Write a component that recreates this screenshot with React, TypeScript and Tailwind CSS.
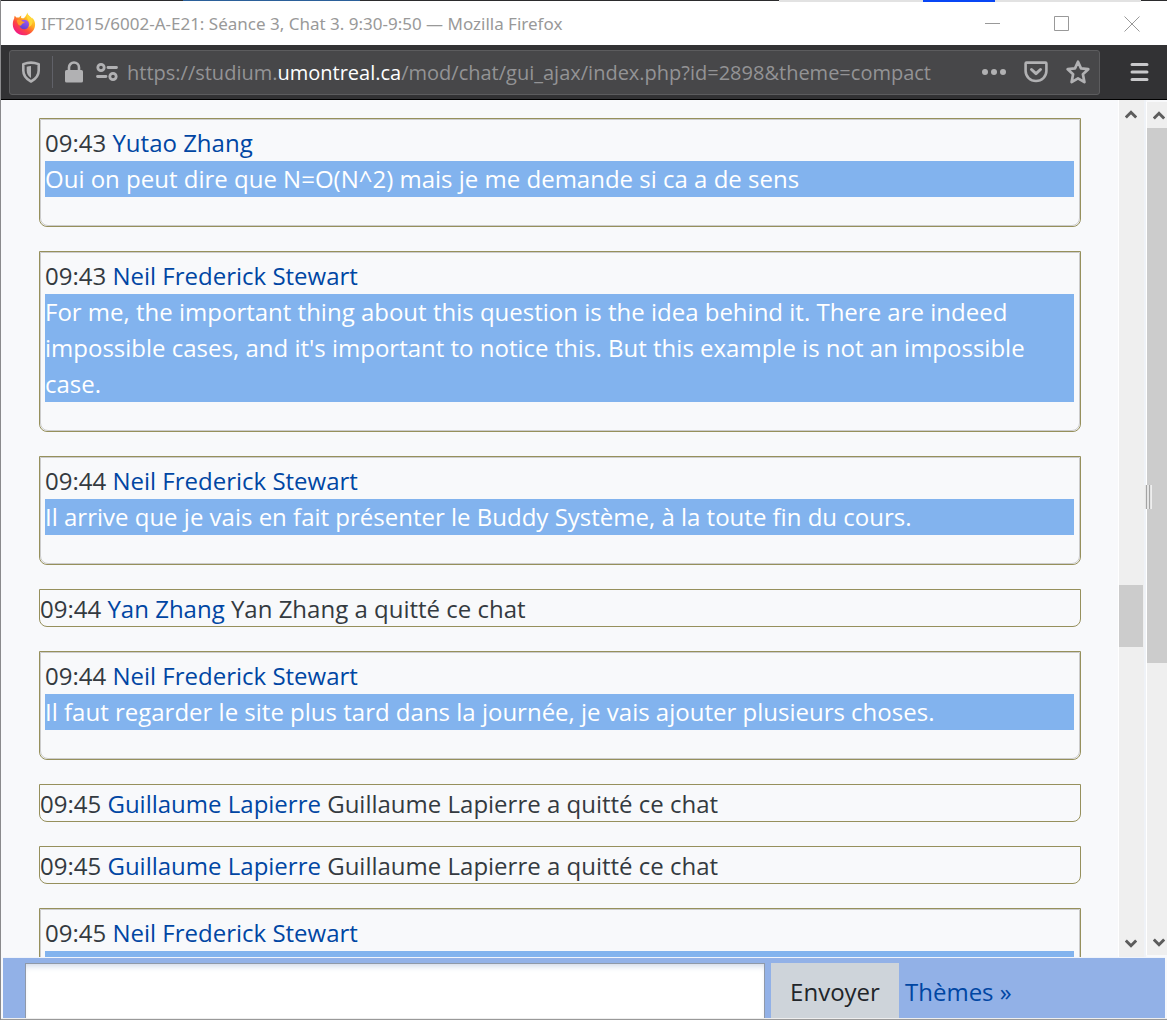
type Message = { time: string; author: string; body?: string; system?: boolean };

const messages: Message[] = [
  { time: "09:43", author: "Yutao Zhang", body: "Oui on peut dire que N=O(N^2) mais je me demande si ca a de sens" },
  {
    time: "09:43",
    author: "Neil Frederick Stewart",
    body: "For me, the important thing about this question is the idea behind it. There are indeed impossible cases, and it's important to notice this. But this example is not an impossible case.",
  },
  { time: "09:44", author: "Neil Frederick Stewart", body: "Il arrive que je vais en fait présenter le Buddy Système, à la toute fin du cours." },
  { time: "09:44", author: "Yan Zhang", body: "Yan Zhang a quitté ce chat", system: true },
  { time: "09:44", author: "Neil Frederick Stewart", body: "Il faut regarder le site plus tard dans la journée, je vais ajouter plusieurs choses." },
  { time: "09:45", author: "Guillaume Lapierre", body: "Guillaume Lapierre a quitté ce chat", system: true },
  { time: "09:45", author: "Guillaume Lapierre", body: "Guillaume Lapierre a quitté ce chat", system: true },
  { time: "09:45", author: "Neil Frederick Stewart" },
];

function FirefoxLogo() {
  return (
    <svg viewBox="0 0 24 24" className="h-6 w-6 shrink-0" aria-hidden="true">
      <defs>
        <linearGradient id="flame" x1="0.85" y1="0.1" x2="0.2" y2="0.95">
          <stop offset="0" stopColor="#ffe83c" />
          <stop offset="0.35" stopColor="#ffab1f" />
          <stop offset="0.65" stopColor="#ff4a3d" />
          <stop offset="1" stopColor="#f0148c" />
        </linearGradient>
        <linearGradient id="globe" x1="0.7" y1="0" x2="0.3" y2="1">
          <stop offset="0" stopColor="#a259f2" />
          <stop offset="1" stopColor="#5b3fd0" />
        </linearGradient>
      </defs>
      <path
        fill="url(#flame)"
        d="M15.3 .4c.3 1.700 1.300 2.800 2.700 4 .9.7 1.700 1.400 2.200 2.300 0-.5-.1-.9-.3-1.300 2.200 1.900 3.300 4.600 3.200 7.300C22.900 18.700 18 23.300 12 23.300S.8 18.600.8 12.500c0-2.300.5-4.300 1.400-6 0-.8.1-1.800.500-2.700.6.500 1.100 1.100 1.600 1.800.9-.3 1.900-.3 2.800 0 .5-.9 1.400-1.600 2.400-2-.5.8-.6 1.600-.3 2.300.7.3 1.600.4 2.500.3 1.600-1.300 3-3.300 3.600-5.800z"
      />
      <circle cx="12.200" cy="12.500" r="4.800" fill="url(#globe)" />
      <path fill="#ff9a2a" d="M4.900 8.300c1.800-.9 3.800-.4 5.100.6.900.7 2 .7 2.700.9 0 1-1 1.300-2.100 1.800-1 .500-.9 1.800-1.800 2-1.900.4-3.800-2.200-3.900-5.300z" />
      <path fill="#ffd83a" d="M15.200 1.500c-.9 3.100-.2 4.800 1.200 7 1.300 2 1.500 4.700.2 6.600 3-1.200 4.600-3.900 4-6.800-.7-2.700-4.600-3.600-5.400-6.800z" />
    </svg>
  );
}

function ShieldIcon() {
  return (
    <svg viewBox="0 0 20 22" className="h-[22px] w-5 shrink-0" aria-hidden="true">
      <path fill="none" stroke="#b1b1b3" strokeWidth="2.600" strokeLinejoin="round" d="M10 1.600c3 0 5.300.6 7.700 1.500v6.400c0 4.800-2.800 8.500-7.700 11-4.900-2.500-7.700-6.200-7.700-11V3.100C4.700 2.200 7 1.600 10 1.600z" />
      <path fill="#b1b1b3" d="M10 5v12c-2.900-1.700-4.300-4.200-4.300-7.500V5.700C7.100 5.200 8.500 5 10 5z" />
    </svg>
  );
}

function LockIcon() {
  return (
    <svg viewBox="0 0 20 22" className="h-[22px] w-5 shrink-0" aria-hidden="true">
      <path fill="none" stroke="#b1b1b3" strokeWidth="2.600" d="M5 11V6.500a5 5 0 0 1 10 0V11" />
      <rect x="1" y="9" width="18" height="12.500" rx="1.600" fill="#b1b1b3" />
    </svg>
  );
}

function PermissionsIcon() {
  return (
    <svg viewBox="0 0 22 20" className="h-5 w-[22px] shrink-0" fill="none" stroke="#b1b1b3" strokeWidth="2.800" strokeLinecap="round" aria-hidden="true">
      <circle cx="5" cy="5.500" r="3.200" />
      <path d="M12 5.500h8.500M1.500 14.500h8.500" />
      <circle cx="17" cy="14.500" r="3.200" />
    </svg>
  );
}

function PocketIcon() {
  return (
    <svg viewBox="0 0 24 22" className="h-[22px] w-6" fill="none" stroke="#b1b1b3" strokeWidth="2.600" strokeLinecap="round" strokeLinejoin="round" aria-hidden="true">
      <path d="M2.500 1.600h19c.5 0 .9.400.9.900V10a10.400 10 0 0 1-20.800 0V2.500c0-.5.400-.9.900-.9z" />
      <path strokeWidth="3" d="M7.500 8.500 12 12.700l4.500-4.200" />
    </svg>
  );
}

function StarIcon() {
  return (
    <svg viewBox="0 0 24 24" className="h-6 w-6" aria-hidden="true">
      <path fill="none" stroke="#b1b1b3" strokeWidth="2.700" strokeLinejoin="round" d="m12 1.700 3 6.700 7.300.8-5.400 5 1.500 7.900L12 18.300l-6.400 3.800 1.500-7.900-5.400-5 7.300-.8z" />
    </svg>
  );
}

function Chevron({ down = false }: { down?: boolean }) {
  return (
    <svg viewBox="0 0 12 9" className="h-[9px] w-3" fill="none" stroke="#5c5c5c" strokeWidth="3" aria-hidden="true">
      <path d={down ? "M.8 1.500 6 6.700l5.200-5.200" : "M.8 7.500 6 2.300l5.200 5.200"} />
    </svg>
  );
}

function TitleBar() {
  return (
    <header className="flex h-[45px] shrink-0 flex-col bg-white">
      <div className="flex h-0.5 shrink-0">
        <div className="h-px w-[182px] bg-[#2b2b2d]" />
        <div className="h-px w-[177px] bg-[#2b609a]" />
        <div className="h-px grow bg-[#2b2b2d]" />
        <div className="w-36 bg-[#e2e2e2]" />
        <div className="w-[72px] bg-[#0846f5]" />
        <div className="w-[146px] bg-[#e2e2e2]" />
        <div className="h-px w-[26px] bg-[#2b2b2d]" />
      </div>
      <div className="flex min-h-0 grow items-center pl-[11px] pr-[27px]">
        <FirefoxLogo />
        <h1 className="ml-[5px] whitespace-nowrap font-['Noto_Sans',sans-serif] text-[17px] leading-6 text-[#999999]">IFT2015/6002-A-E21: Séance 3, Chat 3. 9:30-9:50 — Mozilla Firefox</h1>
        <div className="ml-auto flex gap-[54px]">
          <button aria-label="Réduire">
            <svg viewBox="0 0 16 16" className="h-4 w-4" stroke="#999"><path d="M1 7.500h15" /></svg>
          </button>
          <button aria-label="Agrandir">
            <svg viewBox="0 0 16 16" className="h-4 w-4" stroke="#999" fill="none"><path d="M.5.500h14v14H.5z" /></svg>
          </button>
          <button aria-label="Fermer">
            <svg viewBox="0 0 16 16" className="h-4 w-4" stroke="#999"><path d="m.5.500 15 15m0-15-15 15" /></svg>
          </button>
        </div>
      </div>
    </header>
  );
}

function AddressBar() {
  return (
    <nav className="flex h-[55px] shrink-0 items-center border-b border-black bg-[#323234] pl-2 pr-[18px]">
      <div className="flex h-[45px] min-w-0 grow items-center rounded-[3px] border border-[#5c5c5e] bg-[#474749] pl-[11px] pr-[9px]">
        <ShieldIcon />
        <div className="ml-[11px] h-8 w-px bg-[#606168]" />
        <div className="ml-[11px] flex items-center gap-3">
          <LockIcon />
          <PermissionsIcon />
        </div>
        <p className="ml-[9px] min-w-0 grow truncate pt-0.5 text-[20px] leading-8 text-[#939395]">
          https://studium.<span className="text-white">umontreal.ca</span>/mod/chat/gui_ajax/index.php?id=2898&amp;theme=compact
        </p>
        <div className="flex items-center gap-[18px]">
          <button aria-label="Actions de la page">
            <svg viewBox="0 0 24 6" className="h-1.5 w-6" fill="#b1b1b3"><circle cx="3" cy="3" r="3" /><circle cx="12" cy="3" r="3" /><circle cx="21" cy="3" r="3" /></svg>
          </button>
          <button aria-label="Enregistrer dans Pocket"><PocketIcon /></button>
          <button aria-label="Marquer cette page"><StarIcon /></button>
        </div>
      </div>
      <button aria-label="Ouvrir le menu" className="ml-[30px]">
        <svg viewBox="0 0 19 18" className="h-[18px] w-[19px]" stroke="#c9c9cb" strokeWidth="3" strokeLinecap="round"><path d="M2 1.500h15M2 9h15M2 16.500h15" /></svg>
      </button>
    </nav>
  );
}

function ChatMessage({ time, author, body, system }: Message) {
  if (system) {
    return (
      <li className="rounded-b-lg border border-[#96905c] pt-0.5 leading-[34px]">
        {time} <a href="#profil" className="text-[#0046a3]">{author}</a> {body}
      </li>
    );
  }
  return (
    <li className="rounded-b-lg border border-[#96905c]">
      <div className="rounded-b-lg border border-[#cccccc] pb-7 pl-1 pr-[5px] pt-[5px]">
        <p>
          {time} <a href="#profil" className="text-[#0046a3]">{author}</a>
        </p>
        <p className="min-h-9 bg-[#82b3ee] text-white">{body}</p>
      </div>
    </li>
  );
}

function ListScrollbar() {
  return (
    <div className="flex w-[26px] shrink-0 flex-col border-l border-white bg-[#efefef] pr-px">
      <button aria-label="Défiler vers le haut" className="flex h-7 items-center justify-center"><Chevron /></button>
      <div className="grow-[457]" />
      <div className="grow-[62] bg-[#cccccc]" />
      <div className="grow-[282]" />
      <button aria-label="Défiler vers le bas" className="flex h-7 items-center justify-center"><Chevron down /></button>
    </div>
  );
}

function PageScrollbar() {
  return (
    <div className="relative my-0.5 flex w-[21px] shrink-0 flex-col border-l border-white bg-[#efefef]">
      <button aria-label="Page vers le haut" className="flex h-[26px] items-center justify-end pr-0.5"><Chevron /></button>
      <div className="grow-[535] bg-[#cccccc]" />
      <div className="grow-[266]" />
      <button aria-label="Page vers le bas" className="flex h-[26px] items-center justify-end pr-0.5"><Chevron down /></button>
      <div className="absolute -left-[3px] top-[383px] flex h-6 w-2 justify-center gap-0.5 border-x border-[#eeeeee] bg-[#e4e4e4]">
        <div className="w-px bg-[#a4a4a4]" />
        <div className="w-px bg-[#a4a4a4]" />
      </div>
    </div>
  );
}

export default function App() {
  return (
    <div className="flex h-screen flex-col overflow-hidden border-l border-[#8a8a8c] bg-[#f8f9fb] font-['Open_Sans',sans-serif] text-[#343a40]">
      <TitleBar />
      <AddressBar />
      <main className="flex min-h-0 grow flex-col">
        <section className="flex min-h-0 grow" aria-label="Messages">
          <ul className="flex min-w-0 grow flex-col gap-6 overflow-hidden pl-[38px] pr-[37px] pt-[18px] text-[24px] leading-9 *:shrink-0">
            {messages.map((m, i) => (
              <ChatMessage key={i} {...m} />
            ))}
          </ul>
          <ListScrollbar />
          <div className="w-0.5 shrink-0 bg-[#eff2f7]" />
          <PageScrollbar />
        </section>
        <form className="mx-0.5 flex h-[61px] shrink-0 border-t border-[#f0f4fb] bg-[#92b1e7] pl-[22px] pt-[5px] text-[24px]" onSubmit={(e) => e.preventDefault()}>
          <input aria-label="Message" className="min-w-0 grow border border-b-0 border-[#8f99a8] bg-white px-2 shadow-[inset_0_5px_6px_-3px_#cbd5e6] outline-none" />
          <button className="ml-1.5 w-32 bg-[#ced4da] pt-0.5 text-[#212529]">Envoyer</button>
          <a href="#themes" className="ml-1.5 w-[260px] self-center pt-0.5 text-[#0046a3]">Thèmes »</a>
        </form>
        <div className="h-0.5 shrink-0 border-b border-[#999999] bg-[#eeeeee]" />
      </main>
    </div>
  );
}
